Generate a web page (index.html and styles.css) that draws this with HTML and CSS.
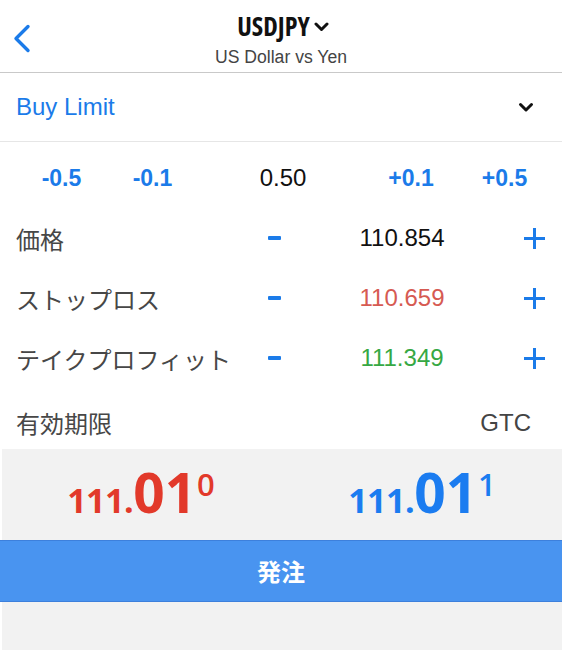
FILE: index.html
```html
<!DOCTYPE html>
<html lang="ja">
<head>
<meta charset="utf-8">
<title>USDJPY Order</title>
<link rel="stylesheet" href="styles.css">
</head>
<body>
<header class="header">
  <div class="back">
    <svg width="18" height="30" viewBox="0 0 18 30"><polyline points="15,2.5 3,14.5 15,26.5" fill="none" stroke="#1b7be9" stroke-width="3.4" stroke-linecap="round" stroke-linejoin="round"/></svg>
  </div>
  <div class="title-block">
    <div class="title"><span class="title-text">USDJPY</span><svg class="title-chev" width="15" height="10" viewBox="0 0 15 10"><polyline points="2,2 7.5,7.5 13,2" fill="none" stroke="#111" stroke-width="3" stroke-linecap="round" stroke-linejoin="round"/></svg></div>
    <div class="subtitle">US Dollar vs Yen</div>
  </div>
  <div></div>
</header>

<div class="type-row">
  <span class="type-name">Buy Limit</span>
  <svg width="16" height="11" viewBox="0 0 16 11"><polyline points="2.5,2.5 8,8 13.5,2.5" fill="none" stroke="#111" stroke-width="3" stroke-linecap="round" stroke-linejoin="round"/></svg>
</div>

<section class="fields">
  <div class="steps">
    <span class="step">-0.5</span>
    <span class="step">-0.1</span>
    <span class="volume">0.50</span>
    <span class="step">+0.1</span>
    <span class="step">+0.5</span>
  </div>

  <div class="field">
    <span class="label">価格</span>
    <span class="minus"></span>
    <span class="value">110.854</span>
    <svg class="plus" width="21" height="21" viewBox="0 0 21 21"><path d="M10.5 0V21M0 10.5H21" stroke="#1b7be9" stroke-width="3"/></svg>
  </div>
  <div class="field">
    <span class="label">ストップロス</span>
    <span class="minus"></span>
    <span class="value sl">110.659</span>
    <svg class="plus" width="21" height="21" viewBox="0 0 21 21"><path d="M10.5 0V21M0 10.5H21" stroke="#1b7be9" stroke-width="3"/></svg>
  </div>
  <div class="field">
    <span class="label">テイクプロフィット</span>
    <span class="minus"></span>
    <span class="value tp">111.349</span>
    <svg class="plus" width="21" height="21" viewBox="0 0 21 21"><path d="M10.5 0V21M0 10.5H21" stroke="#1b7be9" stroke-width="3"/></svg>
  </div>
  <div class="expiry">
    <span class="label">有効期限</span>
    <span class="gtc">GTC</span>
  </div>
</section>

<div class="quotes">
  <div class="price bid"><span class="sm">111.</span><span class="big">01</span><span class="sup">0</span></div>
  <div class="price ask"><span class="sm">111.</span><span class="big">01</span><span class="sup">1</span></div>
</div>
<button class="submit">発注</button>
<div class="bottom"></div>
</body>
</html>
```

FILE: styles.css
```css
* { box-sizing: border-box; }

html, body {
  margin: 0;
  padding: 0;
  background: #ffffff;
}

body {
  font-family: "Liberation Sans", Arial, "Noto Sans CJK JP", sans-serif;
  color: #111;
  width: 562px;
}

.header {
  display: grid;
  grid-template-columns: 1fr auto 1fr;
  height: 73px;
  border-bottom: 1px solid #c9c9c9;
}

.back {
  padding-left: 13px;
  padding-top: 24px;
}

.back svg { display: block; }

.title-block {
  padding-top: 11px;
  text-align: center;
}

.title {
  display: flex;
  align-items: center;
  justify-content: center;
  height: 30px;
  gap: 4px;
  padding-left: 4px;
}

.title-text {
  font-family: "Open Sans", "Noto Sans", sans-serif;
  font-stretch: 75%;
  font-weight: 700;
  font-size: 26px;
  line-height: 30px;
  color: #111;
}

.title-chev {
  display: block;
  margin-top: 2px;
}

.subtitle {
  margin-top: 6px;
  font-size: 17.6px;
  line-height: 20px;
  color: #444;
}

.type-row {
  display: flex;
  align-items: center;
  justify-content: space-between;
  height: 69px;
  padding: 0 28px 0 16px;
  border-bottom: 1px solid #e6e6e6;
}

.type-row svg { display: block; }

.type-name {
  font-size: 24px;
  color: #1b7be9;
}

.fields {
  padding-top: 6px;
}

.steps {
  display: grid;
  grid-template-columns: 91px 91px 170px 86px 101px;
  align-items: center;
  justify-items: center;
  height: 60px;
  padding-left: 16px;
}

.step {
  font-size: 23px;
  font-weight: 700;
  color: #1b7be9;
}

.volume {
  font-size: 24px;
  color: #111;
}

.field {
  display: grid;
  grid-template-columns: 220px 77px 178px 1fr;
  align-items: center;
  height: 60px;
  padding: 0 17px 0 16px;
}

.label {
  font-family: "Noto Sans CJK JP", sans-serif;
  font-size: 24px;
  color: #474747;
  white-space: nowrap;
}

.minus {
  justify-self: center;
  width: 13px;
  height: 4px;
  background: #1b7be9;
  border-radius: 1px;
}

.value {
  justify-self: center;
  font-size: 24px;
  color: #111;
}

.value.sl { color: #d65a52; }
.value.tp { color: #36a843; }

.plus {
  justify-self: end;
  display: block;
}

.expiry {
  display: flex;
  align-items: center;
  justify-content: space-between;
  height: 61px;
  padding: 8px 31px 0 16px;
}

.gtc {
  font-size: 24px;
  color: #444;
}

.quotes {
  display: grid;
  grid-template-columns: 1fr 1fr;
  height: 91px;
  padding-top: 15px;
  margin-left: 2px;
  background: #f2f2f2;
}

.price {
  font-family: "Open Sans", "Noto Sans", sans-serif;
  font-size: 55px;
  line-height: 56px;
  font-weight: 700;
  text-align: center;
  white-space: nowrap;
}

.price .sm {
  font-size: 34px;
  line-height: 1;
  font-weight: 700;
  letter-spacing: -0.5px;
}

.price .sup {
  font-size: 31px;
  line-height: 40px;
  font-weight: 600;
  vertical-align: top;
  margin-left: 1px;
}

.bid { color: #e2392a; padding-right: 2px; }
.ask { color: #1b7cf0; }

.submit {
  display: block;
  width: 100%;
  height: 62px;
  margin: 0;
  padding: 0;
  border: none;
  border-top: 1px solid #3d80dc;
  border-bottom: 1px solid #3d80dc;
  background: #4994f0;
  color: #ffffff;
  font-family: "Noto Sans CJK JP", sans-serif;
  font-size: 24px;
  font-weight: 700;
  line-height: 60px;
}

.bottom {
  height: 48px;
  margin-left: 2px;
  background: #f2f2f2;
}
```
